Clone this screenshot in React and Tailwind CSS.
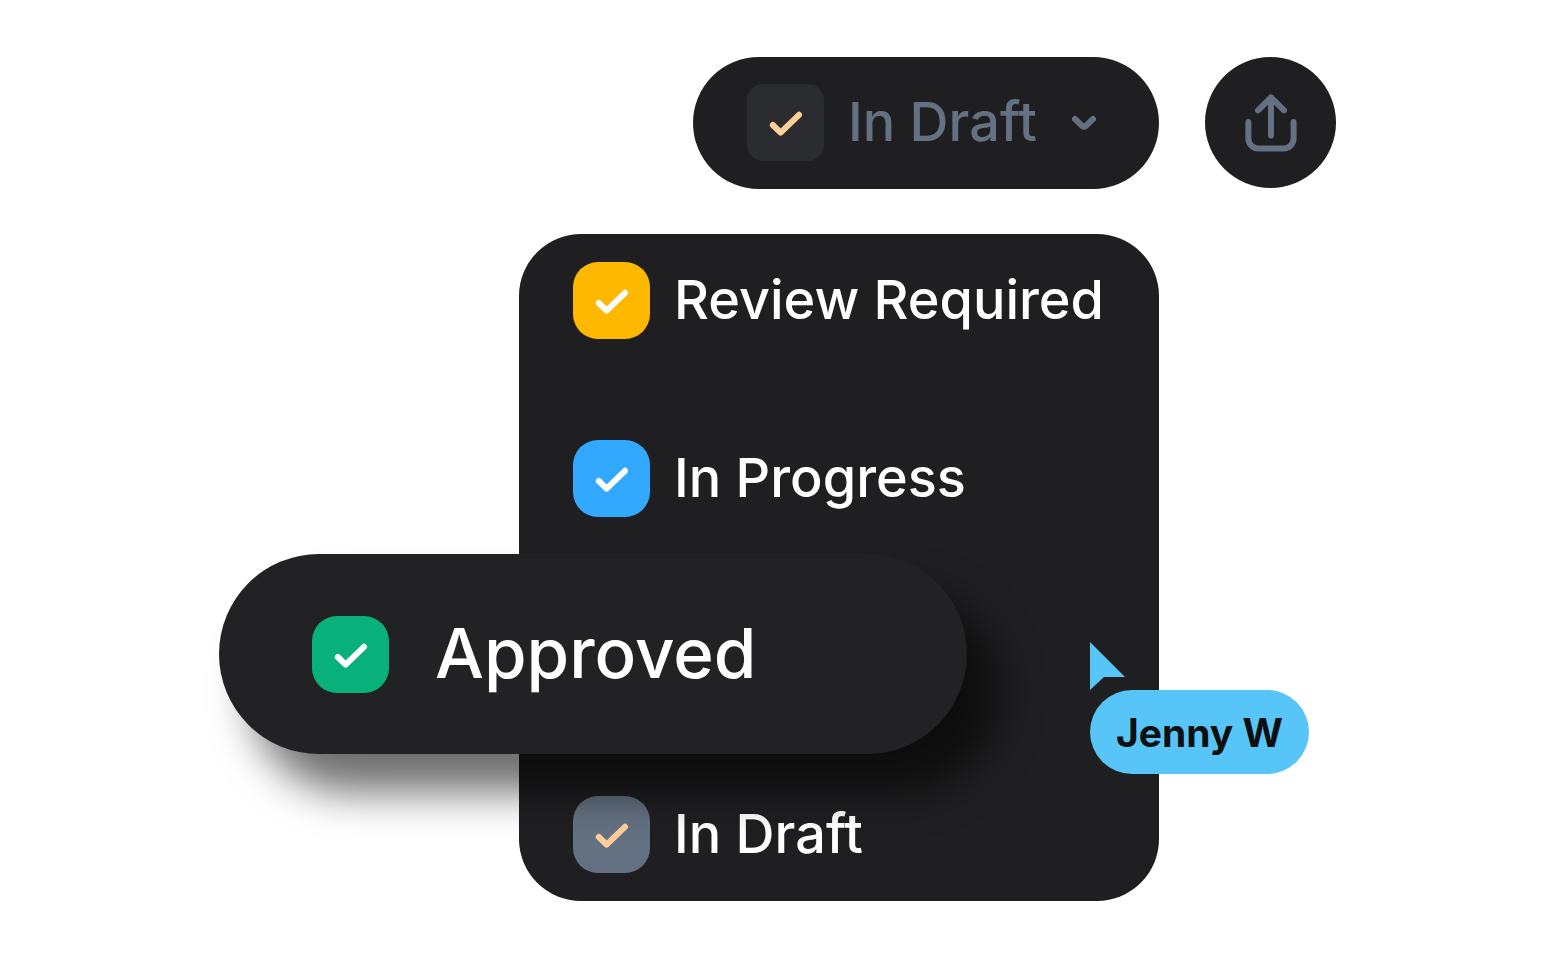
import React from "react";
import clsx from "clsx";

// --- Statuses listed in the menu ---
const STATUSES = [
  { id: "review", label: "Review Required", box: "bg-[#ffb800]", tick: "text-white" },
  { id: "progress", label: "In Progress", box: "bg-[#33a8ff]", tick: "text-white" },
  { id: "approved", label: "Approved", box: "bg-[#09b17a]", tick: "text-white", raised: true },
  { id: "draft", label: "In Draft", box: "bg-[#647182]", tick: "text-[#ffcf99]" },
];

function Tick({ className }) {
  return (
    <svg
      viewBox="0 0 77 77"
      fill="none"
      stroke="currentColor"
      strokeWidth="6"
      strokeLinecap="round"
      strokeLinejoin="round"
      aria-hidden="true"
      className={clsx("pointer-events-none size-full", className)}
    >
      <path d="M25.8 41L33.6 48.6L52 30.8" />
    </svg>
  );
}

function StatusItem({ status }) {
  return (
    <li className="relative h-[77px]">
      <label
        className={clsx(
          "flex items-center font-medium text-white",
          status.raised
            ? "absolute -top-16 -left-[354px] z-10 h-[200px] w-[748px] gap-[46px] rounded-full bg-[#222224] pl-[93px] text-[69px] shadow-[32px_38px_42px_rgba(0,0,0,0.57)]"
            : "h-full gap-6 text-[54px]"
        )}
      >
        <span className="relative size-[77px] shrink-0">
          <input
            type="checkbox"
            defaultChecked
            className={clsx("block size-full appearance-none rounded-[25px]", status.box)}
          />
          <Tick className={clsx("absolute inset-0", status.tick)} />
        </span>
        <span className={clsx("whitespace-nowrap", !status.raised && "pb-0.5")}>{status.label}</span>
      </label>
    </li>
  );
}

function UserCursor({ name }) {
  return (
    <div className="absolute top-[408px] left-[571px] z-20">
      <svg viewBox="0 0 35 48" aria-hidden="true" className="block h-12 w-[35px] fill-[#57c5f7]">
        <path d="M0 0L35 35H14L0 48Z" />
      </svg>
      <div className="flex h-[84px] w-[219px] items-center justify-center rounded-full bg-[#57c5f7] pt-0.5 text-[39px] font-bold whitespace-nowrap text-[#0f0f10]">
        {name}
      </div>
    </div>
  );
}

export default function App() {
  return (
    <main className="min-h-screen bg-white pt-[57px] pb-[53px] font-['Inter',sans-serif]">
      <div className="mx-auto flex max-w-[1118px] flex-col gap-[45px]">
        {/* Toolbar */}
        <div className="flex items-start justify-end gap-[46px]">
          <button
            type="button"
            className="flex h-[132px] w-[466px] items-center rounded-full bg-[#1f1f21] pb-0.5 pl-[54px] text-[54px] font-medium whitespace-nowrap text-[#647182]"
          >
            <span className="mr-6 size-[77px] shrink-0 rounded-2xl bg-[#2b2c2f]">
              <Tick className="text-[#ffcf99]" />
            </span>
            <span className="pb-0.5">In Draft</span>
            <svg
              viewBox="0 0 24 16"
              fill="none"
              stroke="currentColor"
              strokeWidth="6"
              strokeLinecap="round"
              strokeLinejoin="round"
              aria-hidden="true"
              className="ml-[35px] h-4 w-6 shrink-0"
            >
              <path d="M3 5L9.9 11.7Q12 13.6 14.1 11.7L21 5" />
            </svg>
          </button>
          <button
            type="button"
            aria-label="Share"
            className="flex size-[131px] items-center justify-center rounded-full bg-[#1f1f21] text-[#647182]"
          >
            <svg
              viewBox="0 0 52 58"
              fill="none"
              stroke="currentColor"
              strokeWidth="6"
              strokeLinecap="round"
              strokeLinejoin="round"
              aria-hidden="true"
              className="h-[58px] w-[52px]"
            >
              <path d="M26 41.5V3.4M13 16.4L26 3.4L39 16.4" />
              <path d="M3.4 28V44.5A10 10 0 0 0 13.4 54.5H38.6A10 10 0 0 0 48.6 44.5V28" />
            </svg>
          </button>
        </div>

        {/* Status menu */}
        <div className="relative mr-[177px] w-[640px] self-end rounded-[62px] bg-[#1f1f21] px-[54px] py-7">
          <ul className="flex flex-col gap-[101px]">
            {STATUSES.map((status) => (
              <StatusItem key={status.id} status={status} />
            ))}
          </ul>
          <UserCursor name="Jenny W" />
        </div>
      </div>
    </main>
  );
}
